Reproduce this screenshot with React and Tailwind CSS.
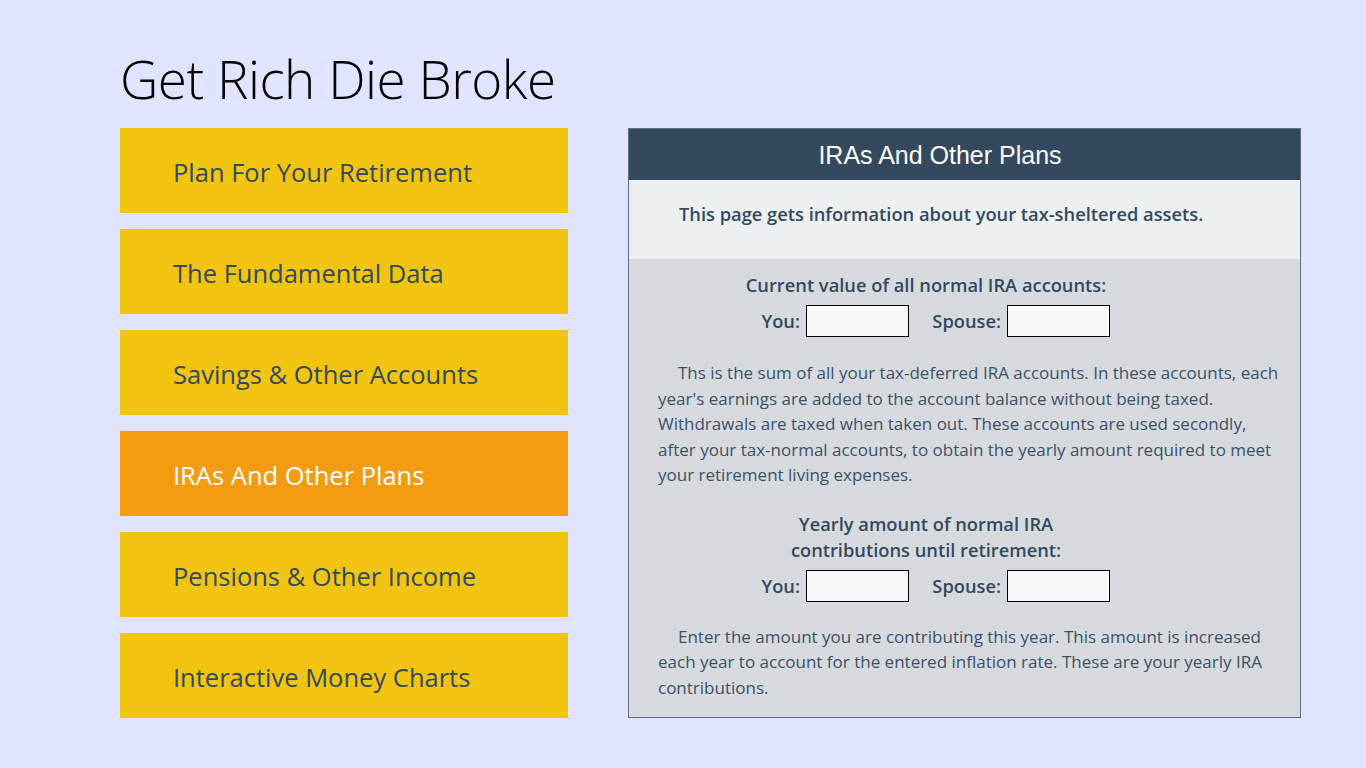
export default function App() {
  const nav = [
    "Plan For Your Retirement",
    "The Fundamental Data",
    "Savings & Other Accounts",
    "IRAs And Other Plans",
    "Pensions & Other Income",
    "Interactive Money Charts",
  ];
  const seg = { fontFamily: '"Open Sans", "Noto Sans", sans-serif' };
  return (
    <div className="w-[1366px] h-[768px] bg-[#e0e4ff] overflow-hidden" style={seg}>
      <div className="pl-[120px] pt-[46px]">
        <h1 className="text-[53px] font-light text-black leading-[66px] h-[82px] tracking-[-0.5px]">Get Rich Die Broke</h1>
        <div className="flex gap-[60px]">
          <div className="w-[448px] flex flex-col gap-[16px]">
            {nav.map((n, i) => (
              <div
                key={n}
                className={`h-[85px] flex items-center pl-[53px] pt-[3px] text-[25.5px] ${i === 3 ? "bg-[#f39c12] text-white" : "bg-[#f1c40f] text-[#34495e]"}`}
              >
                {n}
              </div>
            ))}
          </div>
          <div className="w-[673px] h-[590px] border border-[#5f6f7f] bg-[#d6dadf] flex flex-col">
            <div className="h-[51px] bg-[#34495e] text-white flex items-center justify-center text-[25px] pt-[2px] pr-[49px]" style={{ fontFamily: '"Liberation Sans", Arial, sans-serif' }}>
              IRAs And Other Plans
            </div>
            <div className="h-[79px] bg-[#ecf0f1] pl-[50px] pt-[20px] text-[18.3px] font-semibold text-[#34495e]">
              This page gets information about your tax-sheltered assets.
            </div>
            <div className="pl-[29px] pr-[18px] text-[#34495e]">
              <div className="w-[536px] text-center text-[18.3px] font-semibold mt-[13px] leading-[26px]">
                Current value of all normal IRA accounts:
              </div>
              <Inputs />
              <p className="mt-[23px] text-[17px] leading-[25.5px] indent-[20px] text-[#3d5166]">
                Ths is the sum of all your tax-deferred IRA accounts. In these accounts, each year's earnings are added to the account balance without being taxed. Withdrawals are taxed when taken out. These accounts are used secondly, after your tax-normal accounts, to obtain the yearly amount required to meet your retirement living expenses.
              </p>
              <div className="w-[536px] text-center text-[18.3px] font-semibold mt-[23px] leading-[26px]">
                Yearly amount of normal IRA
                <br />
                contributions until retirement:
              </div>
              <Inputs />
              <p className="mt-[22px] text-[17px] leading-[25.5px] indent-[20px] text-[#3d5166]">
                Enter the amount you are contributing this year. This amount is increased each year to account for the entered inflation rate. These are your yearly IRA contributions.
              </p>
            </div>
          </div>
        </div>
      </div>
    </div>
  );
}

function Inputs() {
  return (
    <div className="flex items-center mt-[7px] text-[18.3px] font-semibold">
      <span className="w-[148px] text-right pr-[6px]">You:</span>
      <div className="w-[103px] h-[32px] bg-[#f8f9fa] border border-black"></div>
      <span className="w-[98px] text-right pr-[6px]">Spouse:</span>
      <div className="w-[103px] h-[32px] bg-[#f8f9fa] border border-black"></div>
    </div>
  );
}
